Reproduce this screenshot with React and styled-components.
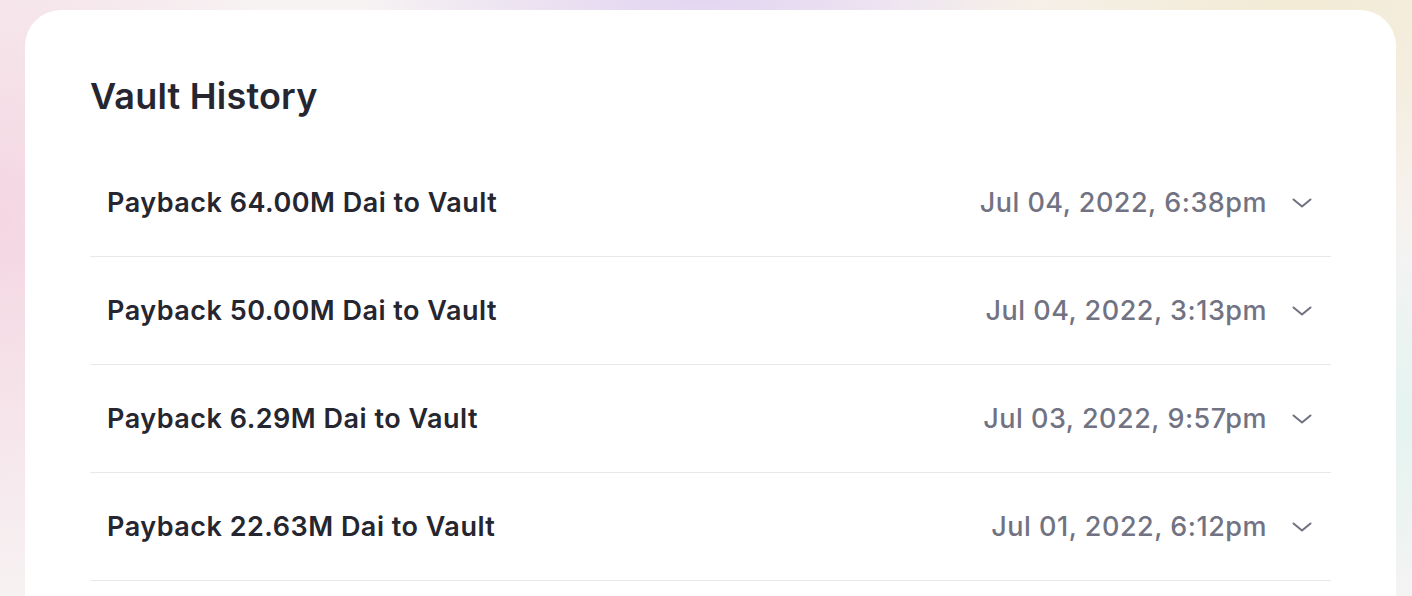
import * as React from 'react';
import styled, { createGlobalStyle } from 'styled-components';

const GlobalStyle = createGlobalStyle`
  html, body {
    margin: 0;
    padding: 0;
    height: 100%;
  }
  body {
    font-family: Inter, "Noto Sans", "Liberation Sans", sans-serif;
    overflow: hidden;
  }
`;

const Page = styled.div`
  box-sizing: border-box;
  width: 1412px;
  height: 596px;
  padding: 10px 16px 0 25px;
  background:
    radial-gradient(ellipse 500px 300px at 1412px 420px, rgba(226, 244, 240, 0.9), rgba(226, 244, 240, 0) 70%),
    radial-gradient(ellipse 600px 380px at 1300px 0px, rgba(242, 234, 210, 0.95), rgba(242, 234, 210, 0) 70%),
    radial-gradient(ellipse 500px 300px at 700px -40px, rgba(222, 206, 240, 0.95), rgba(222, 206, 240, 0) 70%),
    radial-gradient(ellipse 420px 520px at 0px 220px, rgba(244, 214, 226, 1), rgba(244, 214, 226, 0) 75%),
    #f7f3f3;
  overflow: hidden;
`;

const Card = styled.div`
  box-sizing: border-box;
  background: #fff;
  border-radius: 36px 36px 0 0;
  height: 620px;
  padding: 66px 65px 0 65px;
`;

const Title = styled.h2`
  margin: 0 0 33px 0;
  font-size: 36px;
  line-height: 40px;
  font-weight: 600;
  color: #25262f;
  letter-spacing: 0.2px;
`;

const List = styled.div`
  display: flex;
  flex-direction: column;
`;

const Row = styled.div`
  display: flex;
  align-items: center;
  justify-content: space-between;
  height: 107px;
  padding: 0 17px 0 17px;
  border-bottom: 1.5px solid #e8e8ec;
`;

const Label = styled.span`
  font-size: 27px;
  font-weight: 600;
  color: #25262f;
  letter-spacing: 0.5px;
`;

const Right = styled.div`
  display: flex;
  align-items: center;
  gap: 23px;
`;

const DateText = styled.span`
  font-size: 27px;
  font-weight: 500;
  color: #717383;
  letter-spacing: 0.5px;
`;

const Chevron = () => (
  <svg width="24" height="24" viewBox="0 0 24 24" fill="none" stroke="#6f7180" strokeWidth="2" strokeLinecap="round" strokeLinejoin="round">
    <path d="M3.5 8.5l8.5 7 8.5-7" />
  </svg>
);

const items = [
  { label: 'Payback 64.00M Dai to Vault', date: 'Jul 04, 2022, 6:38pm' },
  { label: 'Payback 50.00M Dai to Vault', date: 'Jul 04, 2022, 3:13pm' },
  { label: 'Payback 6.29M Dai to Vault', date: 'Jul 03, 2022, 9:57pm' },
  { label: 'Payback 22.63M Dai to Vault', date: 'Jul 01, 2022, 6:12pm' },
];

export default function App () {
  return (
    <Page>
      <GlobalStyle />
      <Card>
        <Title>Vault History</Title>
        <List>
          {items.map(item => (
            <Row key={item.label + item.date}>
              <Label>{item.label}</Label>
              <Right>
                <DateText>{item.date}</DateText>
                <Chevron />
              </Right>
            </Row>
          ))}
        </List>
      </Card>
    </Page>
  );
}
